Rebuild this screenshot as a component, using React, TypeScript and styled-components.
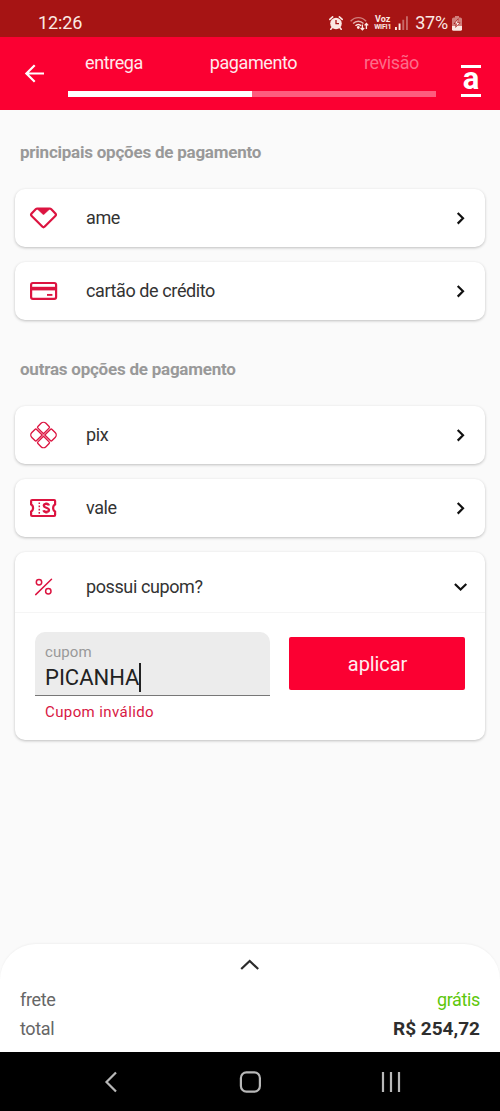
import React from 'react';
import styled, { createGlobalStyle } from 'styled-components';

const Global = createGlobalStyle`
  * { box-sizing: border-box; }
  body { margin: 0; background: #fafafa; font-family: Roboto, "Liberation Sans", sans-serif; }
  svg { display: block; flex: none; }
`;

const Screen = styled.div`
  width: 500px;
  height: 1111px;
  display: flex;
  flex-direction: column;
  overflow: hidden;
  background: #fafafa;
`;

const StatusBar = styled.div`
  height: 37px;
  flex: none;
  background: #a61414;
  color: #fbe9e4;
  display: flex;
  align-items: center;
  padding: 9px 38px 0 38px;
`;

const StatusText = styled.span<{ $push?: boolean }>`
  font-size: 18px;
  line-height: 20px;
  white-space: nowrap;
  letter-spacing: ${(p) => (p.$push ? -0.1 : -0.2)}px;
  margin-right: ${(p) => (p.$push ? 'auto' : '4px')};
`;

const Carrier = styled.span`
  display: flex;
  flex-direction: column;
  align-items: center;
  font-weight: 700;
  font-size: 9px;
  line-height: 7.5px;
  width: 17px;
  margin: 0 4px 0 5px;
  white-space: nowrap;
`;

const CarrierSmall = styled.span`
  font-size: 7px;
  line-height: 6px;
  letter-spacing: -0.2px;
`;

const Header = styled.header`
  height: 73px;
  flex: none;
  background: #fb0032;
  color: #fff;
  display: flex;
  align-items: flex-start;
  padding-left: 24px;
`;

const BackIcon = styled.svg`
  margin: 26px 23px 0 0;
`;

const Stepper = styled.div`
  width: 368px;
  padding-top: 15px;
`;

const Steps = styled.div`
  display: flex;
  justify-content: space-between;
  padding: 0 17px 0 17px;
  height: 39px;
`;

const Step = styled.span<{ $dim?: boolean }>`
  font-size: 18px;
  line-height: 22px;
  letter-spacing: -0.4px;
  color: ${(p) => (p.$dim ? '#fd6c89' : '#ffe9ec')};
`;

const Track = styled.div`
  height: 5.5px;
  background: #fe5c7e;
`;

const Progress = styled.div`
  width: 50%;
  height: 100%;
  background: #fff;
`;

const Logo = styled.div`
  width: 20px;
  height: 32px;
  margin: 28px 0 0 25px;
  border-top: 3.5px solid #fff;
  border-bottom: 3.5px solid #fff;
  display: flex;
  justify-content: center;
  font-weight: 700;
  font-size: 31px;
  line-height: 21px;
`;

const Content = styled.main`
  flex: 1;
  padding: 0 15px;
`;

const SectionTitle = styled.h2<{ $gap: number }>`
  margin: ${(p) => p.$gap}px 0 26px 5px;
  font-size: 17px;
  line-height: 22px;
  font-weight: 700;
  letter-spacing: -0.23px;
  color: #999;
`;

const Card = styled.section`
  background: #fff;
  border-radius: 10px;
  box-shadow: 0 1px 3px rgba(0, 0, 0, 0.24);
  margin-bottom: 14.5px;
`;

const Row = styled.div<{ $tall?: boolean }>`
  display: flex;
  align-items: center;
  height: ${(p) => (p.$tall ? 60 : 58.5)}px;
  padding: ${(p) => (p.$tall ? '10px' : '0')} 17px 0 14px;
`;

const RowLabel = styled.span`
  flex: 1;
  margin-left: 28px;
  font-size: 18px;
  line-height: 22px;
  letter-spacing: -0.4px;
  color: #333;
`;

const Coupon = styled.div`
  display: flex;
  justify-content: space-between;
  border-top: 1px solid #f5f5f5;
  height: 128px;
  padding: 19.5px 20px 0 20px;
`;

const Field = styled.div`
  width: 235px;
`;

const FieldBox = styled.div`
  height: 64px;
  background: #ececec;
  border-radius: 10px 10px 0 0;
  border-bottom: 1.5px solid #777;
  padding: 11px 10px 0;
`;

const FieldLabel = styled.div`
  font-size: 15px;
  line-height: 19px;
  letter-spacing: 0.1px;
  color: #999;
`;

const FieldValue = styled.div`
  display: flex;
  align-items: center;
  height: 31px;
  font-size: 22px;
  color: #222;
`;

const Caret = styled.span`
  width: 1.5px;
  height: 29px;
  background: #222;
`;

const FieldError = styled.div`
  padding: 6px 10px;
  font-size: 15px;
  line-height: 20px;
  letter-spacing: 0.4px;
  color: #d81843;
`;

const Apply = styled.button`
  width: 176px;
  height: 53px;
  margin-top: 5px;
  padding: 1px 0 0 1px;
  border: 0;
  border-radius: 2px;
  background: #fb0032;
  color: #ffeef0;
  font: 400 20px Roboto, sans-serif;
  letter-spacing: -0.1px;
`;

const Sheet = styled.footer`
  height: 108px;
  flex: none;
  background: #fff;
  border-radius: 36px 36px 0 0;
  box-shadow: 0 -1px 2px rgba(0, 0, 0, 0.04);
  padding: 15px 20px 0;
`;

const SheetHandle = styled.div`
  display: flex;
  justify-content: center;
  height: 26px;
`;

const Line = styled.div`
  display: flex;
  justify-content: space-between;
  height: 29px;
  line-height: 29px;
  font-size: 18px;
  letter-spacing: -0.35px;
  color: #666;
`;

const Free = styled.span`
  color: #5ec70c;
`;

const Total = styled.span`
  font-weight: 700;
  font-size: 19px;
  letter-spacing: 0;
  color: #2e2e2e;
`;

const NavBar = styled.nav`
  height: 59px;
  flex: none;
  background: #000;
  display: flex;
  justify-content: space-between;
  align-items: center;
  padding: 0 99px 0 104px;
`;

const red = '#dc1440';

const AlarmIcon = () => (
  <svg width="14" height="14" viewBox="0 0 14 14" fill="none" stroke="#fbe9e4">
    <circle cx="7" cy="7.5" r="5.8" fill="#fbe9e4" stroke="none" />
    <path d="M.8 3.4 3.6.9M13.2 3.4 10.4.9M3.2 11.6 1.8 13.3M10.8 11.6l1.4 1.7" strokeWidth="1.6" strokeLinecap="round" />
    <path d="M7 4v3.7h3" stroke="#a61414" strokeWidth="1.3" />
  </svg>
);

const WifiSvg = styled.svg`
  margin-left: 7px;
`;

const WifiIcon = () => (
  <WifiSvg width="19" height="15" viewBox="0 0 19 15" fill="none" stroke="#fbe9e4" strokeWidth="1.4">
    <path d="M.6 5.2C4.9.4 11.8.4 16.1 5.2" opacity=".5" />
    <path d="M3.1 7.6c3-3.200 7.400-3.200 10.400 0" opacity=".75" />
    <path d="M5.5 9.8c1.600-1.800 4-1.800 5.600 0" />
    <circle cx="8.3" cy="11.5" r="1.4" fill="#fbe9e4" stroke="none" />
    <path d="M12.4 8.5v5.300M10.600 12l1.800 1.900 1.800-1.900M16.400 13V7.500M14.600 9.400l1.800-1.900 1.800 1.900" strokeWidth="1.3" />
  </WifiSvg>
);

const SignalSvg = styled.svg`
  margin-right: 7px;
`;

const SignalIcon = () => (
  <SignalSvg width="13" height="14" viewBox="0 0 13 14" fill="#fbe9e4">
    <path d="M0 11h1.900v3H0zM3.600 7.400h1.900V14H3.600z" />
    <path d="M7.300 3.800h1.900V14H7.300zM11 .2h1.900V14H11z" opacity=".4" />
  </SignalSvg>
);

const BatteryIcon = () => (
  <svg width="10" height="15" viewBox="0 0 10 15" fill="#fbe9e4">
    <path d="M3 0h4v1.400h1.200Q10 1.400 10 3v7H0V3q0-1.600 1.800-1.600H3z" opacity=".5" />
    <path d="M0 10h10v3.300q0 1.500-1.600 1.500H1.600Q0 14.800 0 13.300z" />
    <path d="M6.500 2 1.500 8h2.300L3.300 12 8.500 6.400H6z" fill="#a61414" />
    <path d="M5.900 3.600 2.800 7.500h2L4.400 10.400 7.400 6.900H5.300z" />
  </svg>
);

const AmeIcon = () => (
  <svg width="29" height="22" viewBox="0 0 29 22" fill="none" stroke={red} strokeWidth="2.2" strokeLinejoin="round">
    <path d="M8.300 1.500H20.700Q21.600 1.500 22.300 2.200L26.400 6.500Q27.500 7.800 26.300 9L15.500 19.800Q14.500 20.700 13.500 19.800L2.700 9Q1.500 7.800 2.600 6.500L6.700 2.200Q7.400 1.500 8.300 1.500Z" />
    <path d="M8.500 2h12l-5.300 5q-.7.600-1.400 0z" fill={red} strokeWidth="1" />
  </svg>
);

const CardIcon = () => (
  <svg width="29" height="20" viewBox="0 0 29 20" fill="none" stroke={red} strokeWidth="2.2">
    <rect x="2.1" y="2" width="25" height="15.8" rx="1.8" />
    <path d="M1.500 7.600h26" strokeWidth="3.6" />
    <path d="M18 13.900h5.400" strokeWidth="1.9" />
  </svg>
);

const PixIcon = () => (
  <svg width="29" height="28" viewBox="-14.5 -14 29 28" fill="none" stroke={red} strokeWidth="1.35">
    <g transform="rotate(45)">
      {[0, 90, 180, 270].map((a) => (
        <path
          key={a}
          transform={`rotate(${a})`}
          d="M.9.9H8.800A1.200 1.200 0 0 1 10 2.100V6.500A3.500 3.500 0 0 1 6.500 10H2.100A1.200 1.200 0 0 1 .9 8.800Z"
        />
      ))}
    </g>
  </svg>
);

const TicketIcon = () => (
  <svg width="29" height="20" viewBox="0 0 29 20" fill="none" stroke={red} strokeWidth="2.2">
    <path d="M2.100 6.400V3Q2.100 2 3.100 2H25.100Q26.100 2 26.100 3V6.400L24.900 7.400Q23.400 10 24.900 12.600L26.100 13.600V17Q26.100 18 25.100 18H3.100Q2.100 18 2.100 17V13.600L3.300 12.600Q4.800 10 3.300 7.400Z" />
    <path d="M10.300 4.400v12" strokeWidth="1.5" strokeDasharray="1.7 1.5" />
    <path d="M19.900 7.500C19.500 5.500 14.800 5.300 14.800 7.700 14.800 10.100 20 9.400 20 12 20 14.500 14.900 14.300 14.500 12.200M17.400 4.400V6M17.400 13.800v1.800" strokeWidth="2.3" />
  </svg>
);

const PercentIcon = () => (
  <svg width="29" height="20" viewBox="0 0 29 20" fill="none" stroke={red} strokeWidth="1.5">
    <path d="M6.700 17.600 22.500 2.200" strokeLinecap="round" />
    <circle cx="10" cy="5.2" r="2.7" />
    <circle cx="19.300" cy="14.3" r="2.7" />
  </svg>
);

const ChevronRight = () => (
  <svg width="14" height="14" viewBox="0 0 14 14" fill="none" stroke="#111" strokeWidth="2.2">
    <path d="M3.700 2 9 7.300 3.700 12.600" />
  </svg>
);

const ChevronDown = () => (
  <svg width="14" height="14" viewBox="0 0 14 14" fill="none" stroke="#111" strokeWidth="2.2">
    <path d="M.9 4 6.600 9.500 12.300 4" />
  </svg>
);

const options = {
  main: [
    { label: 'ame', Icon: AmeIcon },
    { label: 'cartão de crédito', Icon: CardIcon },
  ],
  other: [
    { label: 'pix', Icon: PixIcon },
    { label: 'vale', Icon: TicketIcon },
  ],
};

const Option = ({ label, Icon }: { label: string; Icon: React.FC }) => (
  <Card>
    <Row>
      <Icon />
      <RowLabel>{label}</RowLabel>
      <ChevronRight />
    </Row>
  </Card>
);

export default function App() {
  return (
    <Screen>
      <Global />
      <StatusBar>
        <StatusText $push>12:26</StatusText>
        <AlarmIcon />
        <WifiIcon />
        <Carrier>
          <span>Voz</span>
          <CarrierSmall>WIFI1</CarrierSmall>
        </Carrier>
        <SignalIcon />
        <StatusText>37%</StatusText>
        <BatteryIcon />
      </StatusBar>
      <Header>
        <BackIcon width="21" height="21" viewBox="0 0 21 21" fill="none" stroke="#fff" strokeWidth="2.2">
          <path d="M20 10.500H2.500M10.700 2.300 2.400 10.500l8.300 8.200" />
        </BackIcon>
        <Stepper>
          <Steps>
            <Step>entrega</Step>
            <Step>pagamento</Step>
            <Step $dim>revisão</Step>
          </Steps>
          <Track>
            <Progress />
          </Track>
        </Stepper>
        <Logo>a</Logo>
      </Header>
      <Content>
        <SectionTitle $gap={30.5}>principais opções de pagamento</SectionTitle>
        {options.main.map((o) => (
          <Option key={o.label} {...o} />
        ))}
        <SectionTitle $gap={37.5}>outras opções de pagamento</SectionTitle>
        {options.other.map((o) => (
          <Option key={o.label} {...o} />
        ))}
        <Card>
          <Row $tall>
            <PercentIcon />
            <RowLabel>possui cupom?</RowLabel>
            <ChevronDown />
          </Row>
          <Coupon>
            <Field>
              <FieldBox>
                <FieldLabel>cupom</FieldLabel>
                <FieldValue>
                  PICANHA
                  <Caret />
                </FieldValue>
              </FieldBox>
              <FieldError>Cupom inválido</FieldError>
            </Field>
            <Apply>aplicar</Apply>
          </Coupon>
        </Card>
      </Content>
      <Sheet>
        <SheetHandle>
          <svg width="20" height="12" viewBox="0 0 20 12" fill="none" stroke="#2b2b2b" strokeWidth="2.2">
            <path d="M1.200 10 9.700 2l8.500 8" />
          </svg>
        </SheetHandle>
        <Line>
          <span>frete</span>
          <Free>grátis</Free>
        </Line>
        <Line>
          <span>total</span>
          <Total>R$ 254,72</Total>
        </Line>
      </Sheet>
      <NavBar>
        <svg width="14" height="22" viewBox="0 0 14 22" fill="none" stroke="#b8b8b8" strokeWidth="2.2">
          <path d="M12 1.500 2.500 11 12 20.500" />
        </svg>
        <svg width="22" height="22" viewBox="0 0 22 22" fill="none" stroke="#b8b8b8" strokeWidth="2.2">
          <rect x="1.900" y="1.400" width="19" height="19.200" rx="5.500" />
        </svg>
        <svg width="20" height="22" viewBox="0 0 20 22" fill="none" stroke="#b8b8b8" strokeWidth="2.2">
          <path d="M2 1v20M10 1v20M18 1v20" />
        </svg>
      </NavBar>
    </Screen>
  );
}
